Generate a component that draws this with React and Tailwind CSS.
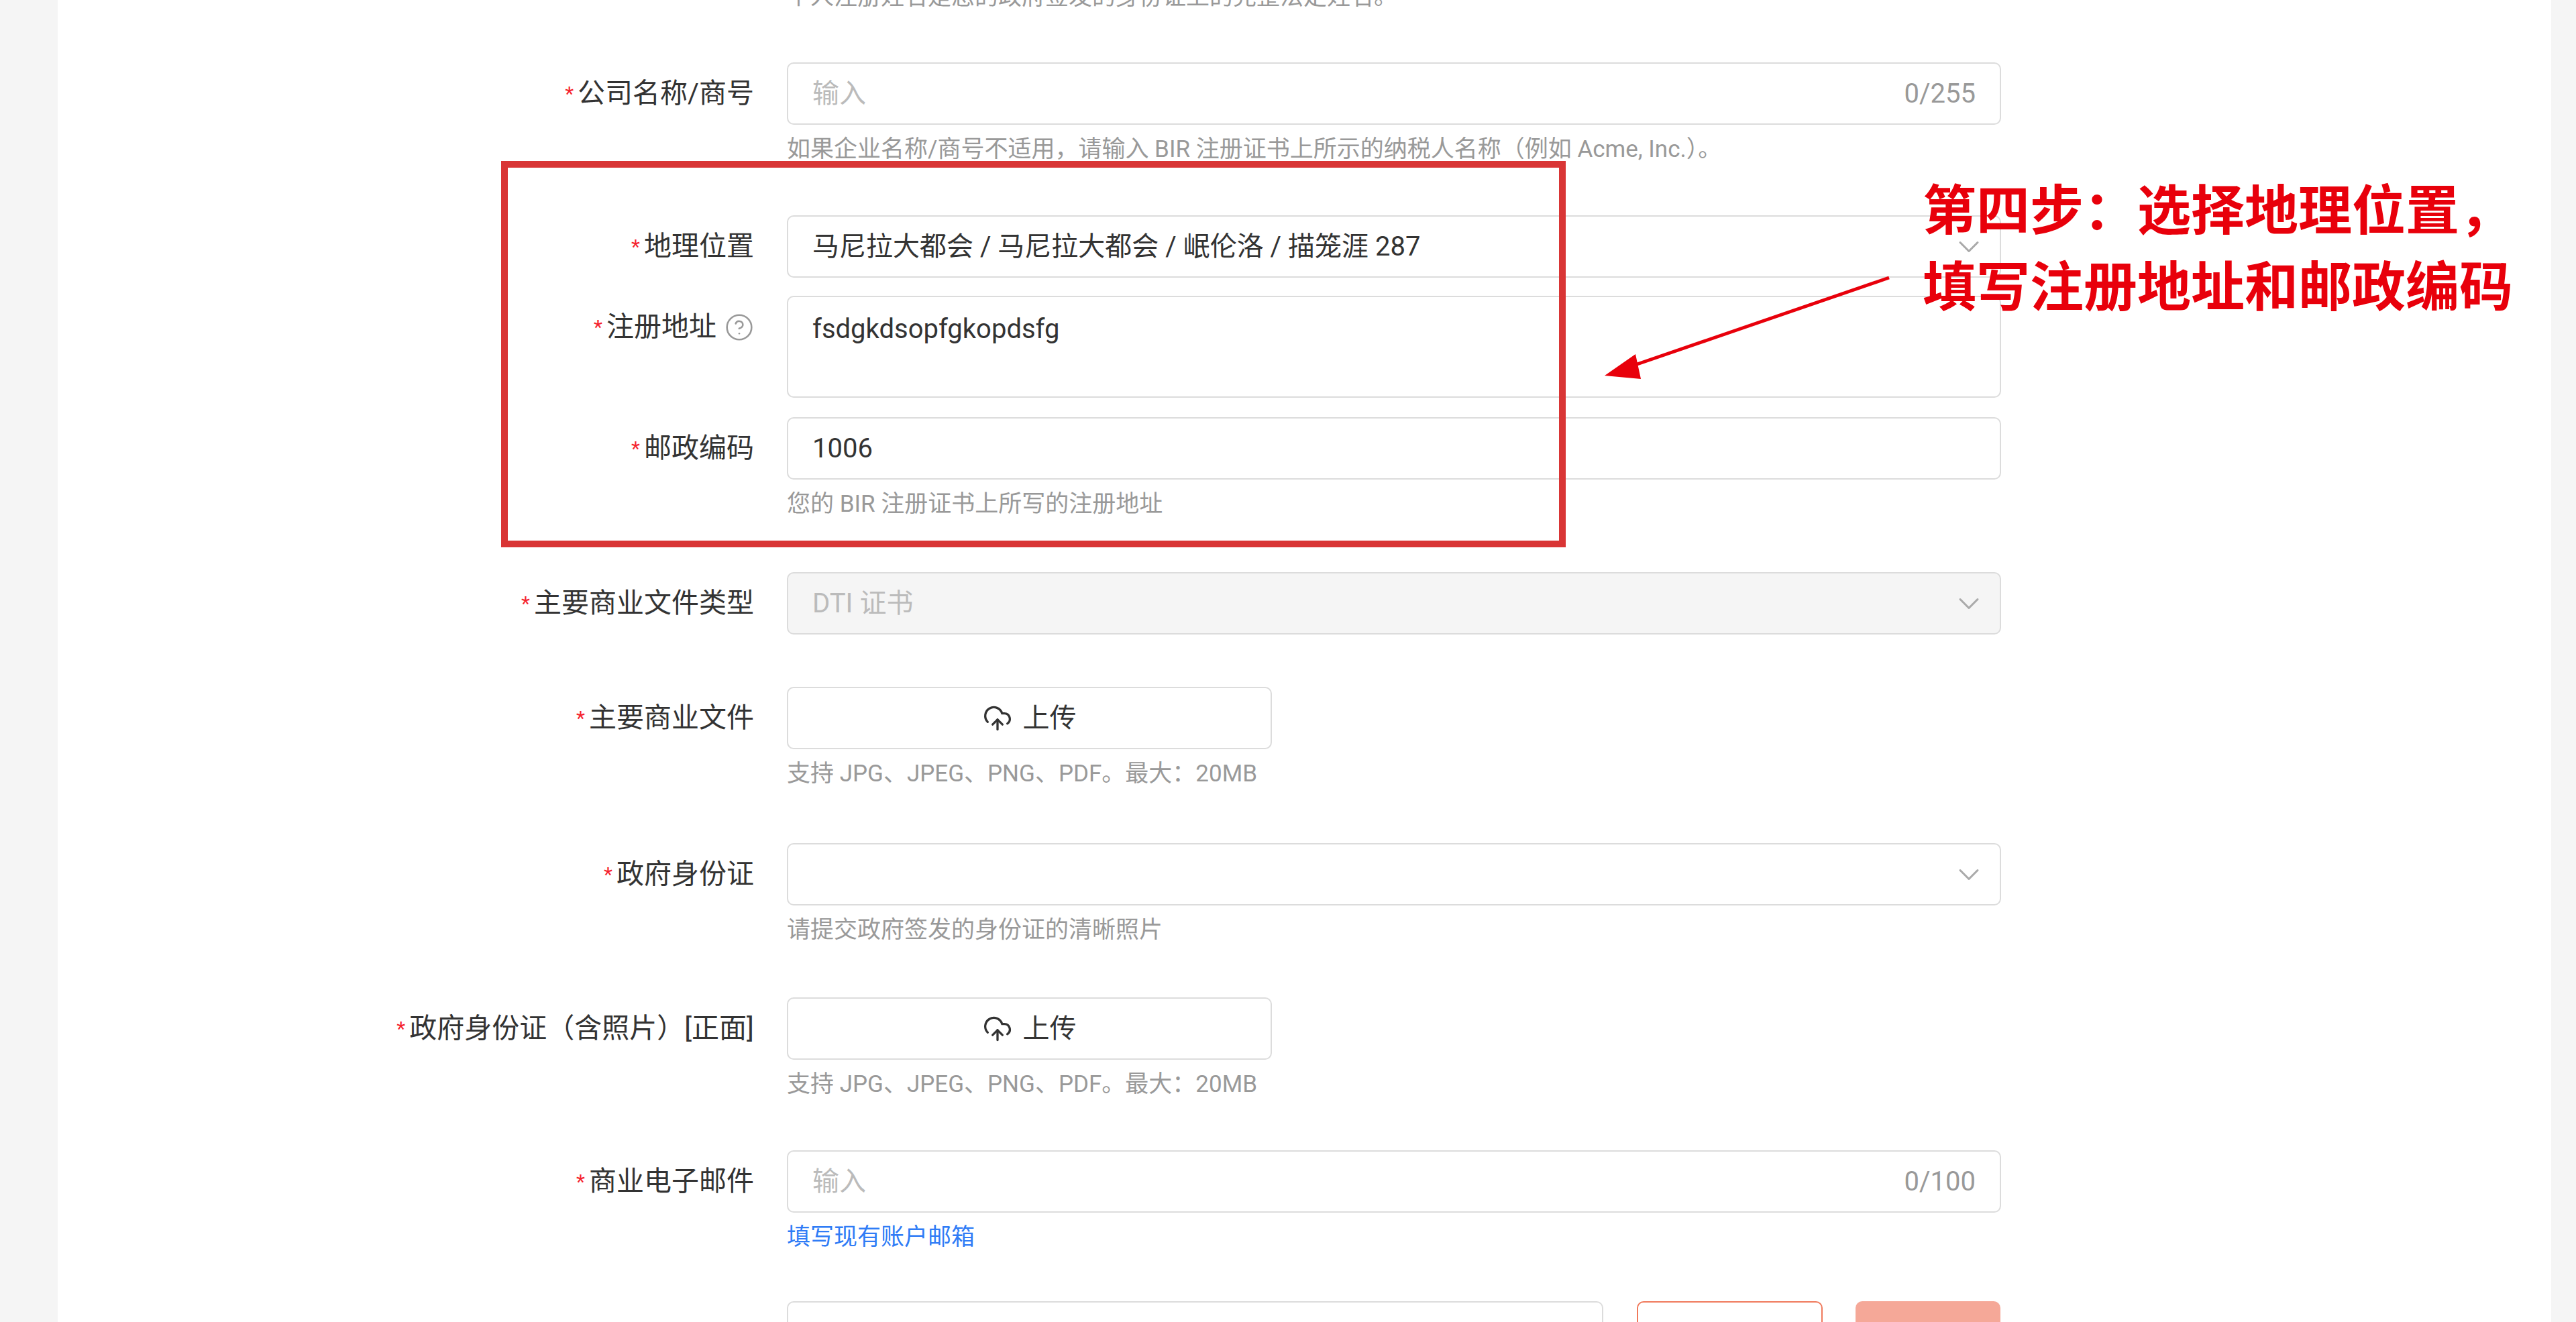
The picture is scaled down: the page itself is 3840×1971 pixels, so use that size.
import { ChevronDown, CloudUpload, CircleHelp } from "lucide-react";

const font = { fontFamily: 'Roboto, "Noto Sans CJK SC", sans-serif' };

function Label({ text, help }) {
  return (
    <div className="w-[1038px] shrink-0 flex justify-end items-center h-[93px] text-[41px] text-[#333]">
      <span className="text-[#f5222d] text-[30px] mr-[6px]">*</span>
      <span>{text}</span>
      {help && <CircleHelp className="ml-[12px] text-[#999]" size={44} strokeWidth={1.4} />}
    </div>
  );
}

function Hint({ children, blue }) {
  return (
    <div className={"mt-[17px] h-[40px] leading-[40px] text-[35px] " + (blue ? "text-[#2f7cf6]" : "text-[#999]")}>
      {children}
    </div>
  );
}

function Row({ label, help, className, children }) {
  return (
    <div className={"flex gap-[49px] " + className}>
      <Label text={label} help={help} />
      <div className="w-[1810px]">{children}</div>
    </div>
  );
}

const box = "h-[93px] border-2 border-[#dcdcdc] rounded-[10px] bg-white flex items-center pl-[36px] pr-[36px] text-[40px]";

function Chevron() {
  return <ChevronDown className="text-[#aaa]" size={52} strokeWidth={1.4} />;
}

function Upload() {
  return (
    <div className="w-[723px] h-[93px] border-2 border-[#dcdcdc] rounded-[10px] flex items-center justify-center gap-[16px] text-[40px] text-[#333]">
      <CloudUpload size={44} strokeWidth={1.8} />
      <span>上传</span>
    </div>
  );
}

export default function App() {
  return (
    <div className="relative w-[3840px] h-[1971px] bg-[#f5f5f5] overflow-hidden" style={font}>
      <div className="ml-[86px] w-[3717px] h-full bg-white flow-root">
        <div className="ml-[1087px] -mt-[24px] h-[40px] leading-[40px] text-[35px] text-[#999]">个人注册姓名是您的政府签发的身份证上的完整法定姓名。</div>
        <Row label="公司名称/商号" className="mt-[77px]">
          <div className={box + " justify-between"}>
            <span className="text-[#bbb]">输入</span>
            <span className="text-[#999]">0/255</span>
          </div>
          <Hint>如果企业名称/商号不适用，请输入 BIR 注册证书上所示的纳税人名称（例如 Acme, Inc.）。</Hint>
        </Row>
        <Row label="地理位置" className="mt-[78px]">
          <div className={box + " justify-between text-[#333] !pr-[20px]"}>
            <span>马尼拉大都会 / 马尼拉大都会 / 岷伦洛 / 描笼涯 287</span>
            <Chevron />
          </div>
        </Row>
        <Row label="注册地址" help className="mt-[27px]">
          <div className="h-[152px] border-2 border-[#dcdcdc] rounded-[10px] px-[36px] pt-[18px] text-[40px] text-[#333]">fsdgkdsopfgkopdsfg</div>
        </Row>
        <Row label="邮政编码" className="mt-[29px]">
          <div className={box + " text-[#333]"}>1006</div>
          <Hint>您的 BIR 注册证书上所写的注册地址</Hint>
        </Row>
        <Row label="主要商业文件类型" className="mt-[81px]">
          <div className={box + " justify-between !bg-[#f5f5f5] text-[#bbb] !pr-[20px]"}>
            <span>DTI 证书</span>
            <Chevron />
          </div>
        </Row>
        <Row label="主要商业文件" className="mt-[78px]">
          <Upload />
          <Hint>支持 JPG、JPEG、PNG、PDF。最大：20MB</Hint>
        </Row>
        <Row label="政府身份证" className="mt-[83px]">
          <div className={box + " justify-end !pr-[20px]"}>
            <Chevron />
          </div>
          <Hint>请提交政府签发的身份证的清晰照片</Hint>
        </Row>
        <Row label="政府身份证（含照片）[正面]" className="mt-[80px]">
          <Upload />
          <Hint>支持 JPG、JPEG、PNG、PDF。最大：20MB</Hint>
        </Row>
        <Row label="商业电子邮件" className="mt-[78px]">
          <div className={box + " justify-between"}>
            <span className="text-[#bbb]">输入</span>
            <span className="text-[#999]">0/100</span>
          </div>
          <Hint blue>填写现有账户邮箱</Hint>
        </Row>
        <div className="flex mt-[75px] ml-[1087px] gap-[51px]">
          <div className="w-[1217px] h-[93px] border-2 border-[#dcdcdc] rounded-[10px]" />
          <div className="w-[277px] h-[93px] border-2 border-[#f07a5c] rounded-[10px] -ml-[1px]" />
          <div className="w-[216px] h-[93px] bg-[#f5a898] rounded-[10px] -ml-[2px]" />
        </div>
      </div>

      <div className="absolute left-[747px] top-[240px] w-[1587px] h-[576px] border-[10px] border-[#d93535]" />
      <div className="absolute left-[2866px] top-[250px] text-[80px] leading-[114px] font-bold text-[#e8000b]" style={{ fontFamily: '"Noto Sans CJK SC", sans-serif' }}>
        <div>第四步：选择地理位置，</div>
        <div>填写注册地址和邮政编码</div>
      </div>
      <svg className="absolute left-0 top-0" width="3840" height="1971">
        <line x1="2816" y1="414" x2="2420" y2="550" stroke="#e8000b" strokeWidth="5" />
        <polygon points="2392,560 2438,528 2446,565" fill="#e8000b" />
      </svg>
    </div>
  );
}
